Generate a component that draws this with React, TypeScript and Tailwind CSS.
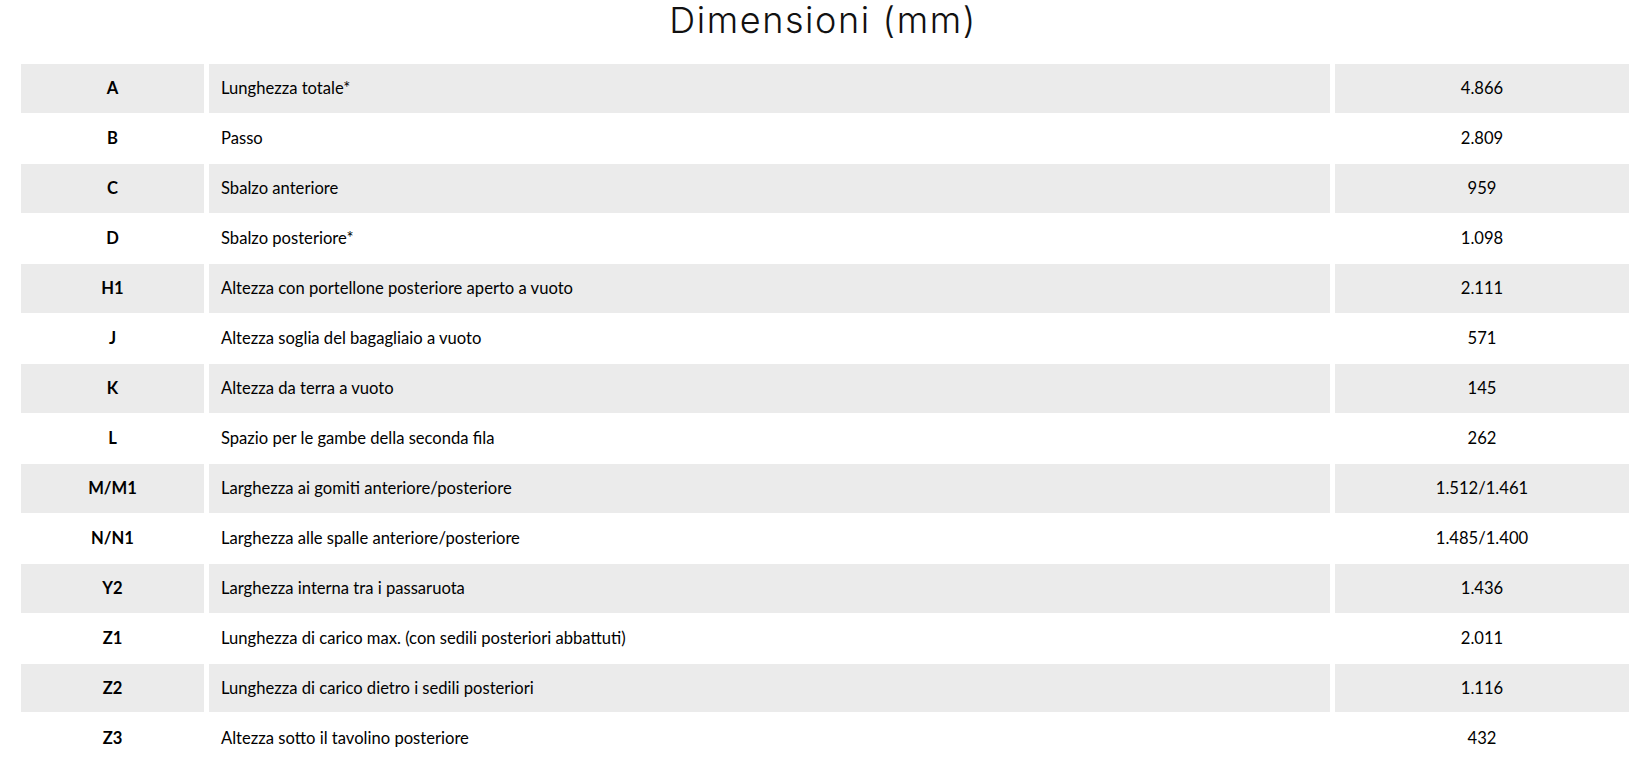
import React from 'react';

type Row = { code: string; label: string; value: string };

const rows: Row[] = [
  { code: 'A', label: 'Lunghezza totale*', value: '4.866' },
  { code: 'B', label: 'Passo', value: '2.809' },
  { code: 'C', label: 'Sbalzo anteriore', value: '959' },
  { code: 'D', label: 'Sbalzo posteriore*', value: '1.098' },
  { code: 'H1', label: 'Altezza con portellone posteriore aperto a vuoto', value: '2.111' },
  { code: 'J', label: 'Altezza soglia del bagagliaio a vuoto', value: '571' },
  { code: 'K', label: 'Altezza da terra a vuoto', value: '145' },
  { code: 'L', label: 'Spazio per le gambe della seconda fila', value: '262' },
  { code: 'M/M1', label: 'Larghezza ai gomiti anteriore/posteriore', value: '1.512/1.461' },
  { code: 'N/N1', label: 'Larghezza alle spalle anteriore/posteriore', value: '1.485/1.400' },
  { code: 'Y2', label: 'Larghezza interna tra i passaruota', value: '1.436' },
  { code: 'Z1', label: 'Lunghezza di carico max. (con sedili posteriori abbattuti)', value: '2.011' },
  { code: 'Z2', label: 'Lunghezza di carico dietro i sedili posteriori', value: '1.116' },
  { code: 'Z3', label: 'Altezza sotto il tavolino posteriore', value: '432' },
];

const App: React.FC = () => {
  return (
    <div className="min-h-screen bg-white font-['Lato',sans-serif] text-black">
      <h2 className="mb-[24px] h-[40px] text-center font-['Inter',sans-serif] text-[36px] font-light leading-[40px] tracking-[1.6px] text-[#111]">
        Dimensioni (mm)
      </h2>

      <div className="ml-[21px] flex w-[1608px] flex-col gap-y-[1.33px]">
        {rows.map((row, i) => {
          const cell = i % 2 === 0 ? 'bg-[#ebebeb]' : 'bg-white';
          return (
            <div
              key={row.code}
              className="grid h-[48.67px] grid-cols-[183px_1121px_294px] gap-x-[5px] text-[16.6px]"
            >
              <div className={`${cell} flex items-center justify-center font-bold`}>{row.code}</div>
              <div className={`${cell} flex items-center pl-[12px]`}>{row.label}</div>
              <div className={`${cell} flex items-center justify-center`}>{row.value}</div>
            </div>
          );
        })}
      </div>
    </div>
  );
};

export default App;
